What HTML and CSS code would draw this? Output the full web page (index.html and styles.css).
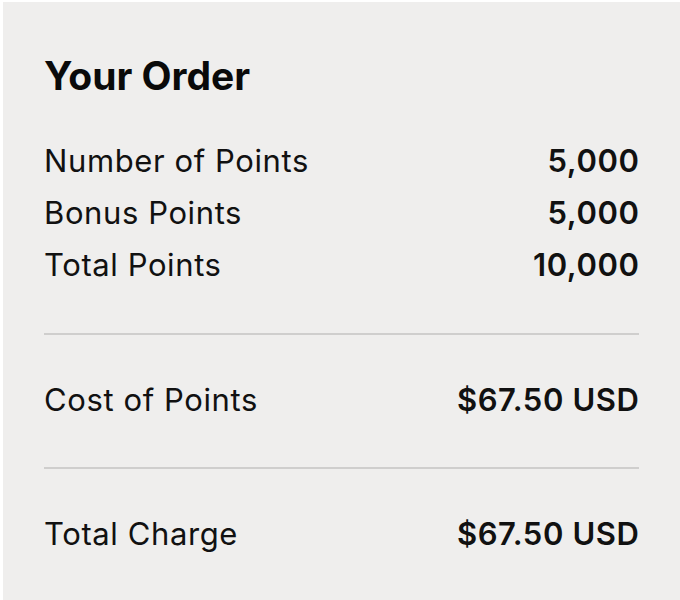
FILE: index.html
```html
<!DOCTYPE html>
<html>
<head>
<meta charset="utf-8">
<link rel="stylesheet" href="styles.css">
</head>
<body>
<section class="card">
  <h1 class="title">Your Order</h1>
  <div class="group">
    <div class="row"><span>Number of Points</span><span class="val">5,000</span></div>
    <div class="row"><span>Bonus Points</span><span class="val">5,000</span></div>
    <div class="row"><span>Total Points</span><span class="val">10,000</span></div>
  </div>
  <div class="group sep">
    <div class="row"><span>Cost of Points</span><span class="val">$67.50 USD</span></div>
  </div>
  <div class="group sep">
    <div class="row"><span>Total Charge</span><span class="val">$67.50 USD</span></div>
  </div>
</section>
</body>
</html>
```

FILE: styles.css
```css
html, body {
  margin: 0;
  padding: 0;
  background: #ffffff;
}
body {
  padding: 2px 0 0 3px;
  font-family: "Inter", "Liberation Sans", sans-serif;
  color: #111111;
}
.card {
  background: #efeeed;
  height: 598px;
  box-sizing: border-box;
  padding: 50px 41px 0 41px;
}
.title {
  margin: 0;
  font-size: 39px;
  font-weight: 700;
  line-height: 48px;
  color: #0a0a0a;
}
.group {
  padding: 35px 0 42px;
}
.group.sep {
  border-top: 2px solid #cfcecd;
  padding: 39px 0 41px;
}
.row {
  display: flex;
  justify-content: space-between;
  font-size: 31px;
  line-height: 52px;
  letter-spacing: 0.6px;
}
.val {
  font-weight: 600;
  margin-right: -0.6px;
}
```
